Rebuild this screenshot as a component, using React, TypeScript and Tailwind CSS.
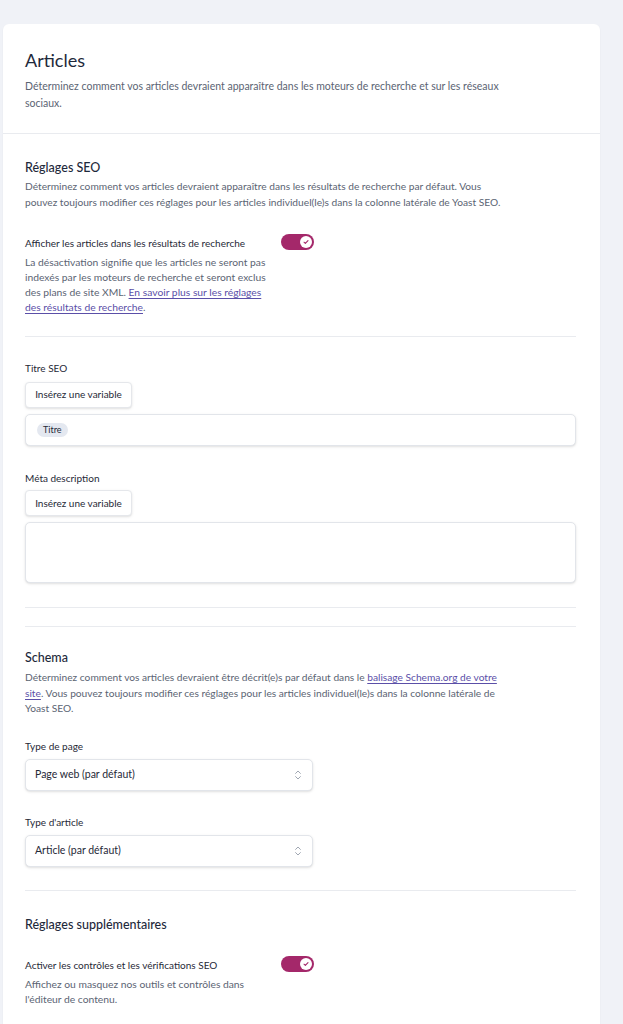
import React, { useState } from "react";

const font = { fontFamily: "Lato, 'Open Sans', sans-serif" };

function Toggle({ on, onChange }: { on: boolean; onChange: (v: boolean) => void }) {
  return (
    <button
      type="button"
      onClick={() => onChange(!on)}
      className={
        "flex h-[16px] w-[33px] items-center rounded-full px-[2px] " +
        (on ? "justify-end bg-[#a4286a]" : "justify-start bg-[#e2e8f0]")
      }
    >
      <span className="flex h-[12px] w-[12px] items-center justify-center rounded-full bg-white">
        {on && (
          <svg viewBox="0 0 12 12" className="h-[8px] w-[8px]">
            <path d="M3 6.3 5 8.2 9 3.8" fill="none" stroke="#a4286a" strokeWidth="1.6" strokeLinecap="round" strokeLinejoin="round" />
          </svg>
        )}
      </span>
    </button>
  );
}

function VarButton() {
  return (
    <button
      type="button"
      className="h-[26px] w-[107px] rounded-[4px] border border-[#e5e7eb] bg-white text-[10px] text-[#1f2937] shadow-sm"
    >
      Insérez une variable
    </button>
  );
}

function Select({ value }: { value: string }) {
  return (
    <div className="flex h-[32px] w-[288px] items-center justify-between rounded-[5px] border border-[#e2e5ea] bg-white pl-[9px] pr-[10px] shadow-sm">
      <span className="text-[10.5px] text-[#1f2937]">{value}</span>
      <svg viewBox="0 0 10 14" className="h-[12px] w-[8px]">
        <path d="M2 5 5 2l3 3M2 9l3 3 3-3" fill="none" stroke="#9ca3af" strokeWidth="1.2" strokeLinecap="round" strokeLinejoin="round" />
      </svg>
    </div>
  );
}

function Link({ children }: { children: React.ReactNode }) {
  return <a className="text-[#5b4fa8] underline underline-offset-2">{children}</a>;
}

export default function App() {
  let [showPosts, setShowPosts] = useState(true);
  let [checks, setChecks] = useState(true);

  return (
    <div className="min-h-screen bg-[#f0f2f7] pl-[3px] pr-[23px] pt-[24px]" style={font}>
      <div className="rounded-t-[6px] bg-white shadow-[0_1px_2px_rgba(0,0,0,0.06)]">
        {/* header */}
        <div className="border-b border-[#e9ebef] pb-[21px] pl-[22px] pr-[24px] pt-[24px]">
          <h1 className="text-[18px] leading-[24px] text-[#1e293b]">Articles</h1>
          <p className="mt-[6px] max-w-[482px] text-[10.5px] leading-[17px] text-[#5b6473]">
            Déterminez comment vos articles devraient apparaître dans les moteurs de recherche et sur les réseaux sociaux.
          </p>
        </div>

        <div className="pl-[22px] pr-[24px]">
          {/* seo settings */}
          <div className="border-b border-[#e9ebef] pb-[21px] pt-[25px]">
            <h2 className="text-[12.5px] font-medium leading-[18px] text-[#1e293b]">Réglages SEO</h2>
            <p className="mt-px max-w-[482px] text-[10.2px] leading-[16px] text-[#5b6473]">
              Déterminez comment vos articles devraient apparaître dans les résultats de recherche par défaut. Vous pouvez toujours modifier ces réglages pour les articles individuel(le)s dans la colonne latérale de Yoast SEO.
            </p>
            <div className="mt-[26px] grid grid-cols-[256px_auto] items-start">
              <div className="max-w-[242px]">
                <div className="text-[10px] leading-[15px] text-[#1f2937]">Afficher les articles dans les résultats de recherche</div>
                <p className="mt-[4px] text-[10.3px] leading-[15px] text-[#5b6473]">
                  La désactivation signifie que les articles ne seront pas indexés par les moteurs de recherche et seront exclus des plans de site XML. <Link>En savoir plus sur les réglages des résultats de recherche</Link>.
                </p>
              </div>
              <div className="-mt-[2px]">
                <Toggle on={showPosts} onChange={setShowPosts} />
              </div>
            </div>
          </div>

          {/* title + meta */}
          <div className="border-b border-[#e9ebef] pb-[24px] pt-[24px]">
            <div className="text-[10px] leading-[15px] text-[#1f2937]">Titre SEO</div>
            <div className="mt-[4px]">
              <VarButton />
            </div>
            <div className="mt-[6px] flex h-[32px] items-center rounded-[5px] border border-[#e2e5ea] bg-white px-[11px] shadow-sm">
              <span className="rounded-full bg-[#e4e8f0] px-[6px] text-[9px] leading-[14px] text-[#1f2937]">Titre</span>
            </div>

            <div className="mt-[25px] text-[10px] leading-[15px] text-[#1f2937]">Méta description</div>
            <div className="mt-[3px]">
              <VarButton />
            </div>
            <div className="mt-[6px] h-[61px] rounded-[5px] border border-[#e2e5ea] bg-white shadow-sm" />
          </div>

          {/* schema */}
          <div className="mt-[18px] border-y border-[#e9ebef] pb-[23px] pt-[22px]">
            <h2 className="text-[12.5px] font-medium leading-[18px] text-[#1e293b]">Schema</h2>
            <p className="mt-[3px] max-w-[482px] text-[10.2px] leading-[15.5px] text-[#5b6473]">
              Déterminez comment vos articles devraient être décrit(e)s par défaut dans le <Link>balisage Schema.org de votre site</Link>. Vous pouvez toujours modifier ces réglages pour les articles individuel(le)s dans la colonne latérale de Yoast SEO.
            </p>
            <div className="mt-[22px] text-[10px] leading-[15px] text-[#1f2937]">Type de page</div>
            <div className="mt-[5px]">
              <Select value="Page web (par défaut)" />
            </div>
            <div className="mt-[24px] text-[10px] leading-[15px] text-[#1f2937]">Type d'article</div>
            <div className="mt-[5px]">
              <Select value="Article (par défaut)" />
            </div>
          </div>

          {/* extra settings */}
          <div className="pb-[30px] pt-[25px]">
            <h2 className="text-[12.5px] font-medium leading-[18px] text-[#1e293b]">Réglages supplémentaires</h2>
            <div className="mt-[24px] grid grid-cols-[256px_auto] items-start">
              <div className="max-w-[242px]">
                <div className="text-[10px] leading-[15px] text-[#1f2937]">Activer les contrôles et les vérifications SEO</div>
                <p className="mt-[4px] text-[10.3px] leading-[15px] text-[#5b6473]">
                  Affichez ou masquez nos outils et contrôles dans l'éditeur de contenu.
                </p>
              </div>
              <div className="-mt-[2px]">
                <Toggle on={checks} onChange={setChecks} />
              </div>
            </div>
          </div>
        </div>
      </div>
    </div>
  );
}
